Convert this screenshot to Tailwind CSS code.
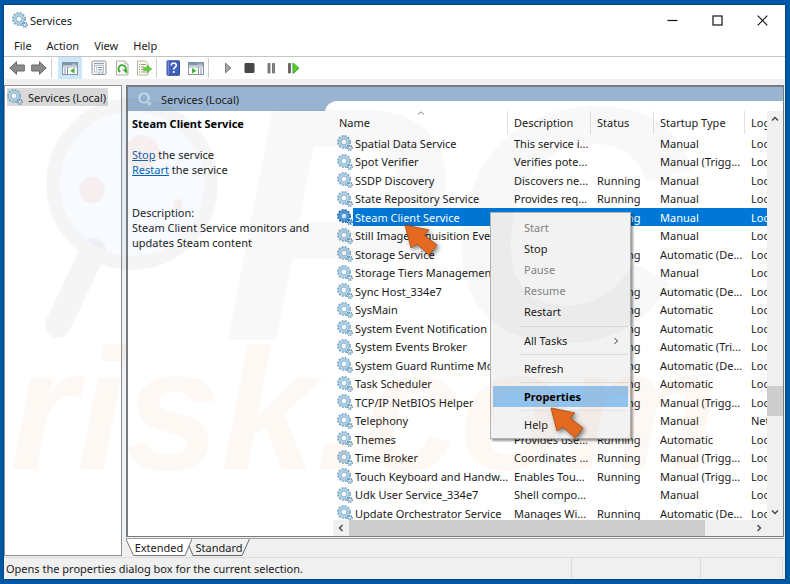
<!DOCTYPE html>
<html lang="en">
<head>
<meta charset="utf-8">
<title>Services</title>
<script src="https://cdn.jsdelivr.net/npm/@tailwindcss/browser@4"></script>
</head>
<body class="relative flex h-screen flex-col overflow-hidden bg-[#0059a5] py-[5px] pr-[5px] pl-1 font-['Noto_Sans','Open_Sans',sans-serif] text-[11px] leading-[15px] text-[#1a1a1a]">

<svg class="hidden">
  <symbol id="gear" viewBox="0 0 16 16">
    <circle cx="7" cy="7" r="6" fill="none" stroke="#7fabc8" stroke-width="2" stroke-dasharray="1.9 1.24"/>
    <circle cx="7" cy="7" r="4.2" fill="#f4fafd" stroke="#b2d3e7" stroke-width="2.4"/>
    <circle cx="7" cy="7" r="5.4" fill="none" stroke="#7fabc8" stroke-width=".5"/>
    <circle cx="7" cy="7" r="2.9" fill="none" stroke="#6c9bb9" stroke-width=".7"/>
    <circle cx="12.8" cy="12.8" r="2.4" fill="none" stroke="#5b8cad" stroke-width="1.4" stroke-dasharray="1.1 .78"/>
    <circle cx="12.8" cy="12.8" r="1.4" fill="#eef7fc" stroke="#7fb0cf" stroke-width="1"/>
  </symbol>
  <symbol id="gear-selected" viewBox="0 0 16 16">
    <circle cx="7" cy="7" r="6" fill="none" stroke="#1d6cb8" stroke-width="2" stroke-dasharray="1.9 1.24"/>
    <circle cx="7" cy="7" r="4.2" fill="#cfe6f8" stroke="#4f9ad6" stroke-width="2.4"/>
    <circle cx="7" cy="7" r="5.4" fill="none" stroke="#1b68b2" stroke-width=".6"/>
    <circle cx="7" cy="7" r="2.9" fill="none" stroke="#1b68b2" stroke-width=".7"/>
    <circle cx="12.8" cy="12.8" r="2.4" fill="none" stroke="#1d6cb8" stroke-width="1.4" stroke-dasharray="1.1 .78"/>
    <circle cx="12.8" cy="12.8" r="1.4" fill="#9ccbef" stroke="#2d7cc4" stroke-width="1"/>
  </symbol>
  <symbol id="pointer" viewBox="0 0 36 34">
    <path d="M2 1 L26 6 L21 11 L34 21 L26 31 L14 20 L8 24 Z" fill="#e46a22" stroke="#a9470f" stroke-width=".8" stroke-linejoin="round"/>
  </symbol>
</svg>

<div class="flex min-h-0 flex-1 flex-col bg-[#f0f0f0] shadow-[0_0_2px_#002b55]">

  <header class="flex h-[30px] items-center bg-white pl-2">
    <svg class="size-4"><use href="#gear"/></svg>
    <h1 class="flex-1 pl-[2px]">Services</h1>
    <button class="flex h-[28px] w-[45px] items-center justify-center" aria-label="Minimize"><svg class="h-[11px] w-[11px]" viewBox="0 0 11 11"><path d="M.5 5.5h10" stroke="#111" stroke-width="1.2"/></svg></button>
    <button class="flex h-[28px] w-[45px] items-center justify-center" aria-label="Maximize"><svg class="h-[11px] w-[11px]" viewBox="0 0 11 11"><rect x="1" y="1" width="9" height="9" fill="none" stroke="#111" stroke-width="1.2"/></svg></button>
    <button class="flex h-[28px] w-[45px] items-center justify-center" aria-label="Close"><svg class="h-[11px] w-[11px]" viewBox="0 0 11 11"><path d="M.7.7l9.6 9.6M10.3.7L.7 10.3" stroke="#111" stroke-width="1.2"/></svg></button>
  </header>

  <nav class="flex h-[21px] items-center gap-[15px] bg-white pl-[10px]" aria-label="Menu bar">
    <button>File</button><button>Action</button><button>View</button><button>Help</button>
  </nav>

  <div class="flex h-[23px] shrink-0 items-center border-t border-[#c4c4c4] bg-white pl-[5px]" role="toolbar" aria-label="Toolbar">
    <button class="mr-[6px]" aria-label="Back"><svg class="h-4 w-4" viewBox="0 0 16 16"><path d="M.7 8L7.5 1.8V5H15.3V11H7.5V14.2Z" fill="#8b8b8b" stroke="#686868" stroke-width="1"/></svg></button>
    <button class="mr-1" aria-label="Forward"><svg class="h-4 w-4" viewBox="0 0 16 16"><path d="M15.3 8L8.5 1.8V5H.7V11H8.5V14.2Z" fill="#8b8b8b" stroke="#686868" stroke-width="1"/></svg></button>
    <span class="mr-[6px] h-5 w-px bg-[#cfcfcf]"></span>
    <button class="mr-[9px] flex h-[22px] w-6 items-center justify-center bg-[#cce6fb]" aria-label="Show or hide console tree"><svg class="h-4 w-4" viewBox="0 0 16 16"><rect x=".5" y="2.5" width="15" height="12" fill="#fff" stroke="#8193a5"/><path d="M1 3h14v2.6H1z" fill="#8496a9"/><path d="M10.5 4.2h1M12.5 4.2h1" stroke="#fff"/><path d="M1 7h14" stroke="#9baab8"/><path d="M5.5 7v7" stroke="#8193a5"/><path d="M2 9h2M2 11h2M2 13h2" stroke="#8193a5"/><path d="M12.5 8v5.6L8 10.8z" fill="#3fb52a"/></svg></button>
    <button class="mr-[7px]" aria-label="Properties"><svg class="h-4 w-4" viewBox="0 0 16 16"><rect x="1" y="1" width="14" height="13.5" rx="1.2" fill="#fafafa" stroke="#8d949b"/><path d="M3 3.5h10" stroke="#9aa3ad" stroke-width="1.2"/><rect x="3.5" y="5.5" width="9" height="6.5" fill="#fff" stroke="#a7b4c0" stroke-width=".8"/><path d="M5 7.5h1M7 7.5h4.500M5 9.800h1M7 9.800h4.500" stroke="#7894ad"/><path d="M7 13.300h2M10.500 13.300h2" stroke="#8d949b" stroke-width=".8"/></svg></button>
    <button class="mr-[6px]" aria-label="Refresh"><svg class="h-4 w-4" viewBox="0 0 16 16"><path d="M2.500 1h8.500l3 3v11H2.500z" fill="#fcfcfa" stroke="#aaa698" stroke-width=".9"/><path d="M11 1v3h3" fill="#eee" stroke="#aaa698" stroke-width=".8"/><path d="M6.300 12A3.700 3.700 0 1 1 11.300 10.800" fill="none" stroke="#39ad32" stroke-width="1.800"/><path d="M8.200 9.600h5v4.500z" fill="#39ad32"/></svg></button>
    <button class="mr-1" aria-label="Export list"><svg class="h-4 w-4" viewBox="0 0 16 16"><path d="M1.500 1h8l2.500 2.500V15H1.500z" fill="#fdfcf3" stroke="#b2aa8e" stroke-width=".9"/><path d="M3 4.500h1M5 4.500h5M3 7h1M5 7h3M3 9.500h1M5 9.500h2M3 12h1M5 12h5" stroke="#8f8b7c" stroke-width=".9"/><path d="M7.500 7.500H11V5l4.700 4-4.700 4v-2.500H7.500z" fill="#62cb3d" stroke="#3da52c" stroke-width=".5"/></svg></button>
    <span class="mr-2 h-5 w-px bg-[#cfcfcf]"></span>
    <button class="mr-[7px]" aria-label="Help"><svg class="h-4 w-4" viewBox="0 0 16 16"><rect x="2" y=".8" width="12.500" height="14.500" rx=".6" fill="#4160bd" stroke="#24418f" stroke-width=".9"/><path d="M3.200 1v14" stroke="#899fe0" stroke-width="1"/><path d="M6.300 5.600c0-3.400 5-3.200 5-.4 0 2-2.500 2-2.500 4.400" fill="none" stroke="#fff" stroke-width="1.600"/><circle cx="8.800" cy="12" r="1.100" fill="#fff"/></svg></button>
    <button class="mr-1" aria-label="Show or hide action pane"><svg class="h-4 w-4" viewBox="0 0 16 16"><rect x=".5" y="2.500" width="15" height="12" fill="#fff" stroke="#8193a5"/><path d="M1 3h14v2.600H1z" fill="#8496a9"/><path d="M10.500 4.200h1M12.500 4.200h1" stroke="#fff"/><path d="M1 7h14" stroke="#9baab8"/><path d="M10.500 7v7" stroke="#8193a5"/><path d="M12 9h2M12 11h2M12 13h2" stroke="#8193a5"/><path d="M4 8v5.600l4.500-2.800z" fill="#3fb52a"/></svg></button>
    <span class="mr-3 h-5 w-px bg-[#cfcfcf]"></span>
    <button class="mr-[6px]" aria-label="Start service"><svg class="h-4 w-4" viewBox="0 0 16 16"><path d="M4.500 3.200v9.600l5.500-4.800z" fill="#a5a5a5" stroke="#777" stroke-width=".9"/></svg></button>
    <button class="mr-[6px]" aria-label="Stop service"><svg class="h-4 w-4" viewBox="0 0 16 16"><rect x="1.500" y="3" width="10" height="10" rx="1.200" fill="#484848"/></svg></button>
    <button class="mr-[6px]" aria-label="Pause service"><svg class="h-4 w-4" viewBox="0 0 16 16"><path d="M3 3.500h2v9.500h-2zM7.500 3.500h2v9.500h-2z" fill="#888" stroke="#606060" stroke-width=".8"/></svg></button>
    <button aria-label="Restart service"><svg class="h-4 w-4" viewBox="0 0 16 16"><path d="M1.500 3.500h2V13h-2z" fill="#666" stroke="#4d4d4d" stroke-width=".7"/><path d="M6 3v10.500l6-5.300z" fill="#4fd329" stroke="#2b9e1f" stroke-width=".9"/></svg></button>
  </div>

  <main class="flex min-h-0 flex-1 gap-1 pt-[6px] pr-px">
    <aside class="w-[118px] shrink-0 border border-[#8b9097] bg-white p-[2px]">
      <a href="#" class="flex h-[18px] w-[101px] items-center gap-[5px] bg-[#d9d9d9]"><svg class="size-4 shrink-0"><use href="#gear"/></svg><span class="whitespace-nowrap">Services (Local)</span></a>
    </aside>

    <div class="flex min-w-0 flex-1 flex-col">
      <section class="flex min-h-0 flex-1 flex-col border border-[#777c82] border-t-2 border-l-2 bg-white">
        <div class="flex h-6 shrink-0 items-center gap-2 bg-[#99b4d1] pl-[9px]"><svg class="h-4 w-4" viewBox="0 0 16 16"><circle cx="7" cy="7" r="4.500" fill="none" stroke="#c4dff0" stroke-width="2.200"/><circle cx="7" cy="7" r="3" fill="none" stroke="#7ba3c4" stroke-width=".7"/><circle cx="12.500" cy="12.500" r="2" fill="#bcd9ec"/></svg><h2>Services (Local)</h2></div>
        <div class="flex min-h-0 flex-1">
          <div class="w-[197px] shrink-0 px-1 pt-[5px]">
            <h3 class="font-bold text-black">Steam Client Service</h3>
            <p class="pt-4"><a href="#" class="text-[#0063b8] underline">Stop</a> the service<br><a href="#" class="text-[#0063b8] underline">Restart</a> the service</p>
            <p class="pt-[28px]">Description:<br>Steam Client Service monitors and updates Steam content</p>
          </div>
          <div class="-mt-[10px] flex min-w-0 flex-1 flex-col rounded-tl-[12px] bg-white">
            <div class="flex min-h-0 flex-1">
              <div class="relative min-w-0 flex-1 overflow-hidden">
                <table class="w-full table-fixed border-collapse whitespace-nowrap text-left">
                  <colgroup><col class="w-[183px]"><col class="w-[83px]"><col class="w-[63px]"><col class="w-[91px]"><col></colgroup>
                  <thead><tr class="h-[33px] [&>th]:p-0 [&>th]:pt-[10px] [&>th]:font-normal">
                    <th><div class="flex h-[23px] items-center border-r border-[#e2e2e2] pl-[14px]">Name</div></th>
                    <th><div class="flex h-[23px] items-center border-r border-[#e2e2e2] pl-[6px]">Description</div></th>
                    <th><div class="flex h-[23px] items-center border-r border-[#e2e2e2] pl-[6px]">Status</div></th>
                    <th><div class="flex h-[23px] items-center border-r border-[#e2e2e2] pl-[6px]">Startup Type</div></th>
                    <th><div class="flex h-[23px] items-center overflow-hidden pl-[6px]">Log On As</div></th>
                  </tr></thead>
                  <tbody id="services" class="[&>tr]:h-[18px] [&>tr:nth-child(even)]:h-[19px]"></tbody>
                </table>
                <svg class="absolute top-[10px] left-[92px] h-1 w-2" viewBox="0 0 8 4"><path d="M1 3.500L4 .8l3 2.700" fill="none" stroke="#777" stroke-width=".9"/></svg>
              </div>
              <div class="mt-[10px] flex w-4 shrink-0 flex-col items-center bg-[#f0f0f0]">
                <button class="flex h-4 w-4 items-center justify-center" aria-label="Scroll up"><svg class="h-2 w-2" viewBox="0 0 8 8"><path d="M1 5.500L4 2.500l3 3" fill="none" stroke="#404040" stroke-width="1.300"/></svg></button>
                <div class="flex-[258]"></div>
                <div class="w-4 flex-[30] bg-[#cdcdcd]"></div>
                <div class="flex-[88]"></div>
                <button class="flex h-4 w-4 items-center justify-center" aria-label="Scroll down"><svg class="h-2 w-2" viewBox="0 0 8 8"><path d="M1 2.500L4 5.500l3-3" fill="none" stroke="#404040" stroke-width="1.300"/></svg></button>
              </div>
            </div>
            <div class="ml-2 flex h-4 shrink-0 items-center bg-[#f0f0f0]">
              <button class="flex h-4 w-4 items-center justify-center" aria-label="Scroll left"><svg class="h-2 w-2" viewBox="0 0 8 8"><path d="M5.500 1L2.500 4l3 3" fill="none" stroke="#404040" stroke-width="1.300"/></svg></button>
              <div class="h-4 flex-[354] bg-[#cdcdcd]"></div>
              <div class="flex-[46]"></div>
              <button class="mr-4 flex h-4 w-4 items-center justify-center" aria-label="Scroll right"><svg class="h-2 w-2" viewBox="0 0 8 8"><path d="M2.500 1L5.500 4l-3 3" fill="none" stroke="#404040" stroke-width="1.300"/></svg></button>
            </div>
          </div>
        </div>
      </section>
      <div class="mt-px flex h-[18px] shrink-0 border-t border-[#a0a0a0]" role="tablist">
        <button role="tab" aria-selected="true" class="relative h-[17px] w-[66px]"><svg class="absolute inset-0 h-full w-full" viewBox="0 0 66 17" preserveAspectRatio="none"><path d="M0 0L7.500 16.500H59L66 0" fill="#fff" stroke="#777" stroke-width="1"/></svg><span class="relative">Extended</span></button>
        <button role="tab" aria-selected="false" class="relative -ml-1 h-[17px] w-[62px]"><svg class="absolute inset-0 h-full w-full" viewBox="0 0 62 17" preserveAspectRatio="none"><path d="M1 7L5 16.500H54L61.500 0" fill="none" stroke="#666" stroke-width="1"/></svg><span class="relative">Standard</span></button>
      </div>
    </div>
  </main>

  <footer class="mt-px flex h-[22px] shrink-0 items-center border-t border-[#dcdcdc] pl-[2px]">
    <p class="flex-1">Opens the properties dialog box for the current selection.</p>
    <span class="h-full w-[129px] border-l border-[#dcdcdc]"></span><span class="mr-[2px] h-full w-[83px] border-x border-[#dcdcdc]"></span>
  </footer>
</div>

<div class="absolute top-[212px] left-[490px] w-[141px] border border-[#b4b4b4] bg-[#f2f2f2] px-[2px] pt-1 pb-[3px] shadow-[2px_2px_2px_rgba(0,0,0,0.4)]" role="menu">
  <button role="menuitem" disabled class="flex h-[21px] w-full items-center pl-[31px] text-[#838383]">Start</button>
  <button role="menuitem" class="flex h-[21px] w-full items-center pl-[31px]">Stop</button>
  <button role="menuitem" disabled class="flex h-[21px] w-full items-center pl-[31px] text-[#838383]">Pause</button>
  <button role="menuitem" disabled class="flex h-[21px] w-full items-center pl-[31px] text-[#838383]">Resume</button>
  <button role="menuitem" class="flex h-[21px] w-full items-center pl-[31px]">Restart</button>
  <hr class="mt-1 mb-[3px] ml-[27px] border-[#dcdcdc]">
  <button role="menuitem" class="flex h-[21px] w-full items-center justify-between pr-2 pl-[31px]">All Tasks<svg class="h-2 w-2" viewBox="0 0 8 8"><path d="M2.500 1L5.500 4l-3 3" fill="none" stroke="#333" stroke-width="1"/></svg></button>
  <hr class="my-[3px] ml-[27px] border-[#dcdcdc]">
  <button role="menuitem" class="flex h-[21px] w-full items-center pl-[31px]">Refresh</button>
  <hr class="my-[3px] ml-[27px] border-[#dcdcdc]">
  <button role="menuitem" class="flex h-[21px] w-full items-center bg-[#91c3ee] pl-[31px] font-bold text-black">Properties</button>
  <hr class="my-[3px] ml-[27px] border-[#e6e6e6]">
  <button role="menuitem" class="flex h-[21px] w-full items-center pl-[31px]">Help</button>
</div>

<svg class="pointer-events-none absolute top-0 left-0 h-[584px] w-[790px]" viewBox="0 0 790 584" aria-hidden="true">
  <g opacity=".035">
    <circle cx="132" cy="184" r="79" fill="none" stroke="#112" stroke-width="14"/>
    <path d="M93 251L58 325" stroke="#112" stroke-width="26" stroke-linecap="round"/>
  </g>
  <circle cx="132" cy="184" r="72" fill="#3c78e0" opacity=".04"/>
  <g fill="#ff5a3c" opacity=".07"><circle cx="92" cy="190" r="13"/><circle cx="142" cy="152" r="17"/><circle cx="178" cy="204" r="5"/></g>
  <text x="222" y="340" font-family="Liberation Sans" font-weight="bold" font-style="italic" font-size="335" fill="#000" opacity=".025">PC</text>
  <text x="10" y="469" font-family="Liberation Sans" font-weight="bold" font-style="italic" font-size="172" fill="#f26a1b" opacity=".04">risk.com</text>
</svg>

<svg class="pointer-events-none absolute top-[224px] left-[403px] h-[34px] w-9 drop-shadow-[2px_2px_2px_rgba(0,0,0,0.5)]" aria-hidden="true"><use href="#pointer"/></svg>
<svg class="pointer-events-none absolute top-[407px] left-[549px] h-[34px] w-9 drop-shadow-[2px_2px_2px_rgba(0,0,0,0.5)]" aria-hidden="true"><use href="#pointer"/></svg>

<script>
const services = [
  ["Spatial Data Service", "This service i...", "", "Manual", "Loc"],
  ["Spot Verifier", "Verifies pote...", "", "Manual (Trigg...", "Loc"],
  ["SSDP Discovery", "Discovers ne...", "Running", "Manual", "Loc"],
  ["State Repository Service", "Provides req...", "Running", "Manual", "Loc"],
  ["Steam Client Service", "Steam Client...", "Running", "Manual", "Loc"],
  ["Still Image Acquisition Events", "Launches ap...", "", "Manual", "Loc"],
  ["Storage Service", "Provides ena...", "Running", "Automatic (De...", "Loc"],
  ["Storage Tiers Management", "Optimizes th...", "", "Manual", "Loc"],
  ["Sync Host_334e7", "This service ...", "Running", "Automatic (De...", "Loc"],
  ["SysMain", "Maintains a...", "Running", "Automatic", "Loc"],
  ["System Event Notification S...", "Monitors sy...", "Running", "Automatic", "Loc"],
  ["System Events Broker", "Coordinates ...", "Running", "Automatic (Tri...", "Loc"],
  ["System Guard Runtime Mo...", "Monitors an...", "Running", "Automatic (De...", "Loc"],
  ["Task Scheduler", "Enables a us...", "Running", "Automatic", "Loc"],
  ["TCP/IP NetBIOS Helper", "Provides sup...", "Running", "Manual (Trigg...", "Loc"],
  ["Telephony", "Provides Tel...", "", "Manual", "Net"],
  ["Themes", "Provides use...", "Running", "Automatic", "Loc"],
  ["Time Broker", "Coordinates ...", "Running", "Manual (Trigg...", "Loc"],
  ["Touch Keyboard and Handw...", "Enables Tou...", "Running", "Manual (Trigg...", "Loc"],
  ["Udk User Service_334e7", "Shell compo...", "", "Manual", "Loc"],
  ["Update Orchestrator Service", "Manages Wi...", "Running", "Automatic (De...", "Loc"]
];
const accounts = { Loc: "Local System", Net: "Network Service" };
document.getElementById("services").innerHTML = services.map(([name, description, status, startup, account]) => {
  const selected = name === "Steam Client Service";
  const cell = selected ? "overflow-hidden bg-[#0078d7] p-0 pl-[6px] text-white" : "overflow-hidden p-0 pl-[6px]";
  const label = selected ? "flex h-[18px] flex-1 items-center bg-[#0078d7] pl-[2px] text-white" : "flex h-[18px] flex-1 items-center pl-[2px]";
  const icon = selected ? "#gear-selected" : "#gear";
  return `<tr><td class="p-0"><div class="flex items-center pl-3"><svg class="size-4 shrink-0"><use href="${icon}"/></svg><span class="${label}">${name}</span></div></td>
    <td class="${cell}">${description}</td><td class="${cell}">${status}</td><td class="${cell}">${startup}</td><td class="${cell}">${accounts[account]}</td></tr>`;
}).join("");
</script>
</body>
</html>
